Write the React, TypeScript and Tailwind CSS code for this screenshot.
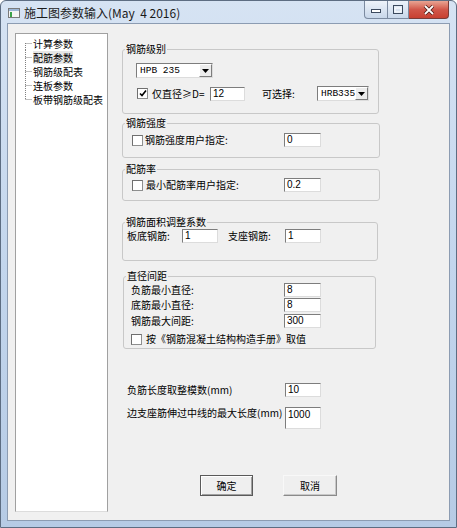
import React from 'react';

// Win7 basic-theme dialog: 施工图参数输入

const sunken =
  'border border-t-[#7d7d7d] border-l-[#7d7d7d] border-r-[#dcdcdc] border-b-[#dcdcdc]';

function Edit({ value, w = 'w-[37px]', h = 'h-[14px]', top = false }: { value: string; w?: string; h?: string; top?: boolean }) {
  return (
    <div
      className={`${w} ${h} shrink-0 bg-white ${sunken} pl-[2px] font-['Liberation_Sans',sans-serif] text-[10px] leading-[12px] text-black flex ${top ? 'items-start pt-[1px]' : 'items-center'}`}
    >
      {value}
    </div>
  );
}

function Combo({ value, w }: { value: string; w: string }) {
  return (
    <div className={`${w} h-[15px] shrink-0 bg-white ${sunken} flex items-stretch`}>
      <span className="flex-1 pl-[3px] font-['Liberation_Mono',monospace] text-[9.5px] leading-[13px] text-black">
        {value}
      </span>
      <span className="w-[13px] bg-[#ececec] border border-t-white border-l-white border-r-[#7d7d7d] border-b-[#7d7d7d] flex items-center justify-center">
        <svg width="7" height="4" viewBox="0 0 7 4">
          <path d="M0 0h7L3.5 4z" fill="#000" />
        </svg>
      </span>
    </div>
  );
}

function Check({ checked = false }: { checked?: boolean }) {
  return (
    <span className="w-[11px] h-[11px] shrink-0 bg-white border border-[#8e8f8f] border-t-[#6f6f6f] border-l-[#6f6f6f] flex items-center justify-center">
      {checked && (
        <svg width="8" height="7" viewBox="0 0 8 7">
          <path d="M1 3.5l2 2 4-5" stroke="#000" strokeWidth="1.6" fill="none" />
        </svg>
      )}
    </span>
  );
}

function Group({ title, className, children }: { title: string; className: string; children: React.ReactNode }) {
  return (
    <fieldset className={`border border-[#c8c8c8] rounded-[3px] shrink-0 ${className}`}>
      <legend className="ml-[2px] px-[1px] leading-[14px]">{title}</legend>
      {children}
    </fieldset>
  );
}

const treeItems = ['计算参数', '配筋参数', '钢筋级配表', '连板参数', '板带钢筋级配表'];

function Tree() {
  return (
    <div className="ml-[7px] mt-[9px] w-[93px] h-[479px] bg-white border border-[#a0a0a0] border-b-[#dcdcdc] pt-[2px] shrink-0">
      {treeItems.map((label, i) => {
        const first = i === 0;
        const last = i === treeItems.length - 1;
        return (
          <div key={label} className="flex items-center h-[14px] pl-[9px]">
            <svg width="8" height="14" viewBox="0 0 8 14" className="shrink-0">
              <path
                d={`M0.5 ${first ? 7 : 0}V${last ? 7 : 14}M0.5 7.5H7`}
                stroke="#808080"
                strokeDasharray="1 1"
                fill="none"
              />
            </svg>
            <span className={`leading-[13px] ${i === 1 ? 'bg-[#e6e6e6]' : ''}`}>{label}</span>
          </div>
        );
      })}
    </div>
  );
}

function CaptionButtons() {
  return (
    <div className="ml-auto mr-[7px] self-start flex">
      <div className="flex h-[18px] rounded-bl-[4px] border border-t-0 border-[#7b8aa0] overflow-hidden bg-gradient-to-b from-[#eef3fa] to-[#c8d7ea]">
        <div className="w-[23px] flex items-center justify-center border-r border-[#7b8aa0]">
          <svg width="10" height="6" viewBox="0 0 10 6">
            <rect x="0.5" y="2.5" width="9" height="3" fill="#fff" stroke="#3c4a5e" />
          </svg>
        </div>
        <div className="w-[20px] flex items-center justify-center">
          <svg width="10" height="9" viewBox="0 0 10 9">
            <rect x="0.5" y="0.5" width="9" height="8" fill="none" stroke="#3c4a5e" />
            <rect x="2" y="3" width="6" height="4" fill="none" stroke="#fff" />
          </svg>
        </div>
      </div>
      <div className="w-[40px] h-[18px] rounded-br-[4px] border border-t-0 border-l-0 border-[#7a3c38] bg-gradient-to-b from-[#e8a493] via-[#d1574a] to-[#c84031] flex items-center justify-center">
        <svg width="12" height="10" viewBox="0 0 12 10">
          <path d="M2 1l8 8M10 1l-8 8" stroke="#4a1a14" strokeWidth="3.4" />
          <path d="M2 1l8 8M10 1l-8 8" stroke="#fff" strokeWidth="1.8" />
        </svg>
      </div>
    </div>
  );
}

export default function App() {
  return (
    <div className="w-[457px] h-[528px] flex flex-col rounded-t-[6px] border border-[#5d6d82] bg-gradient-to-b from-[#d6e3f3] via-[#c3d6ed] to-[#b6cbe5] font-['Noto_Sans_CJK_SC',sans-serif] text-[10px] leading-[14px] text-black overflow-hidden">
      {/* Title bar */}
      <div className="h-[22px] flex shrink-0">
        <div className="flex items-center pl-[7px] pt-[2px]">
          <svg width="12" height="10" viewBox="0 0 12 10">
            <rect x="0.5" y="0.5" width="11" height="9" fill="#f4f4f4" stroke="#7a7a7a" />
            <rect x="1" y="1" width="10" height="2" fill="#9bb6d6" />
            <rect x="2" y="4" width="2" height="5" fill="#3aa14a" />
          </svg>
          <span className="ml-[4px] text-[12px] leading-[16px] whitespace-pre text-[#1a1a1a]">施工图参数输入(May  4 2016)</span>
        </div>
        <CaptionButtons />
      </div>

      {/* Client area */}
      <div className="mx-[6px] mb-[6px] flex-1 bg-[#f0f0f0] border border-[#8c9cb2] flex">
        <Tree />

        <div className="ml-[14px] pt-[18px] flex flex-col">
          <Group title="钢筋级别" className="w-[257px] h-[72px]">
            <div className="mt-[7px] ml-[13px]">
              <Combo value="HPB 235" w="w-[77px]" />
            </div>
            <div className="mt-[8px] ml-[14px] flex items-center h-[15px]">
              <Check checked />
              <span className="ml-[4px] w-[58px]">仅直径≥D=</span>
              <Edit value="12" w="w-[35px]" />
              <span className="ml-[17px] w-[55px]">可选择:</span>
              <Combo value="HRB335" w="w-[52px]" />
            </div>
          </Group>

          <Group title="钢筋强度" className="mt-[2px] w-[258px] h-[42px]">
            <div className="mt-[3px] ml-[9px] flex items-center h-[14px]">
              <Check />
              <span className="ml-[2px] w-[139px]">钢筋强度用户指定:</span>
              <Edit value="0" />
            </div>
          </Group>

          <Group title="配筋率" className="mt-[4px] w-[258px] h-[39px]">
            <div className="mt-[2px] ml-[9px] flex items-center h-[14px]">
              <Check />
              <span className="ml-[3px] w-[138px]">最小配筋率用户指定:</span>
              <Edit value="0.2" />
            </div>
          </Group>

          <Group title="钢筋面积调整系数" className="mt-[14px] w-[256px] h-[46px]">
            <div className="ml-[4px] flex items-center h-[14px]">
              <span className="w-[55px]">板底钢筋:</span>
              <Edit value="1" w="w-[36px]" />
              <span className="ml-[10px] w-[57px]">支座钢筋:</span>
              <Edit value="1" w="w-[36px]" />
            </div>
          </Group>

          <Group title="直径间距" className="mt-[8px] ml-[1px] w-[253px] h-[80px]">
            <div className="ml-[7px] flex flex-col">
              <div className="flex items-center h-[14px]">
                <span className="w-[153px]">负筋最小直径:</span>
                <Edit value="8" />
              </div>
              <div className="mt-[1px] flex items-center h-[14px]">
                <span className="w-[153px]">底筋最小直径:</span>
                <Edit value="8" />
              </div>
              <div className="mt-[2px] flex items-center h-[14px]">
                <span className="w-[153px]">钢筋最大间距:</span>
                <Edit value="300" />
              </div>
              <div className="mt-[4px] flex items-center h-[14px]">
                <Check />
                <span className="ml-[4px]">按《钢筋混凝土结构构造手册》取值</span>
              </div>
            </div>
          </Group>

          <div className="mt-[34px] ml-[5px] flex items-center h-[14px]">
            <span className="w-[158px]">负筋长度取整模数(mm)</span>
            <Edit value="10" w="w-[36px]" />
          </div>
          <div className="mt-[10px] ml-[5px] flex items-start">
            <span className="w-[158px] -mt-[1px] whitespace-nowrap">边支座筋伸过中线的最大长度(mm)</span>
            <Edit value="1000" w="w-[36px]" h="h-[22px]" top />
          </div>

          <div className="mt-[46px] ml-[78px] flex gap-[30px]">
            <button className="w-[53px] h-[21px] bg-[#efefef] border border-[#5a5a5a] shadow-[inset_1px_1px_0_#ffffff,inset_-1px_-1px_0_#a0a0a0] flex items-center justify-center text-[10px] leading-[14px]">
              确定
            </button>
            <button className="w-[54px] h-[21px] bg-[#efefef] border border-t-[#f8f8f8] border-l-[#f8f8f8] border-r-[#8a8a8a] border-b-[#8a8a8a] shadow-[inset_-1px_-1px_0_#c8c8c8] flex items-center justify-center text-[10px] leading-[14px]">
              取消
            </button>
          </div>
        </div>
      </div>
    </div>
  );
}
